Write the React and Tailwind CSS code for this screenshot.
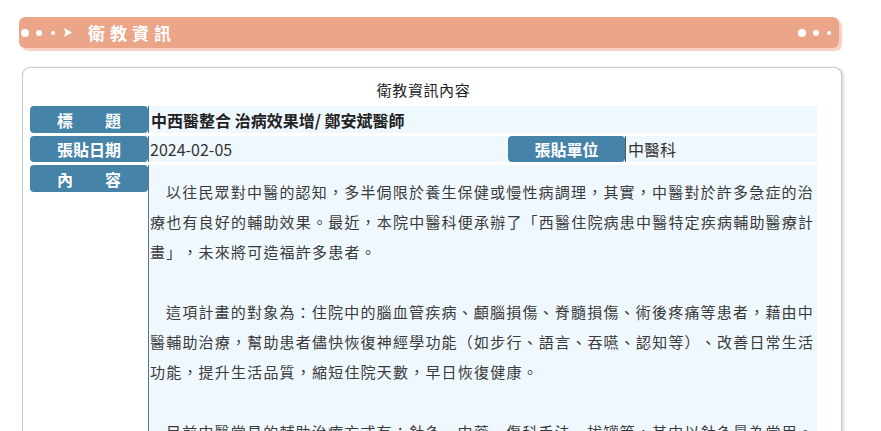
import React from "react";

const paragraphs = [
  "以往民眾對中醫的認知，多半侷限於養生保健或慢性病調理，其實，中醫對於許多急症的治療也有良好的輔助效果。最近，本院中醫科便承辦了「西醫住院病患中醫特定疾病輔助醫療計畫」，未來將可造福許多患者。",
  "這項計畫的對象為：住院中的腦血管疾病、顱腦損傷、脊髓損傷、術後疼痛等患者，藉由中醫輔助治療，幫助患者儘快恢復神經學功能（如步行、語言、吞嚥、認知等）、改善日常生活功能，提升生活品質，縮短住院天數，早日恢復健康。",
  "目前中醫常見的輔助治療方式有：針灸、中藥、傷科手法、拔罐等，其中以針灸最為常用。",
];

function Label({ children, className = "" }) {
  return (
    <div
      className={`flex items-center justify-center rounded-[4px] bg-[#4683a9] text-[16px] font-bold text-white shrink-0 ${className}`}
    >
      {children}
    </div>
  );
}

function HeaderBar() {
  return (
    <div className="flex h-[31px] w-[820px] items-center rounded-[6px] bg-[#eba689] shadow-[3px_3px_0_#f8d2c3]">
      <div className="flex items-center">
        <span className="ml-[2px] h-[8px] w-[8px] rounded-full bg-white" />
        <span className="ml-[7px] h-[6px] w-[6px] rounded-full bg-white" />
        <span className="ml-[9px] h-[4px] w-[4px] rounded-full bg-white" />
        <svg className="ml-[9px]" width="8" height="9" viewBox="0 0 8 9">
          <path d="M0 0 L8 4.5 L0 9 L1.6 4.5 Z" fill="#fff" />
        </svg>
      </div>
      <div className="ml-[16px] text-[17px] font-bold tracking-[5px] text-white">
        衛教資訊
      </div>
      <div className="ml-auto mr-[8px] flex items-center">
        <span className="h-[8px] w-[8px] rounded-full bg-white" />
        <span className="ml-[7px] h-[6px] w-[6px] rounded-full bg-white" />
        <span className="ml-[8px] h-[4px] w-[4px] rounded-full bg-white" />
      </div>
    </div>
  );
}

export default function App() {
  return (
    <div
      className="min-h-screen bg-white pl-[19px] pt-[17px] text-[#333] [text-spacing-trim:space-all]"
      style={{ fontFamily: '"Noto Sans CJK TC", "Noto Sans", "Liberation Sans", sans-serif' }}
    >
      <HeaderBar />

      <div className="ml-[3px] mt-[19px] w-[820px] rounded-t-[8px] border border-b-0 border-[#c9c9c9] bg-white pb-4 pl-[7px] pt-[11px] shadow-[2px_1px_3px_rgba(0,0,0,0.15)]">
        <div className="w-[787px] text-center text-[15px] leading-[22px] tracking-[0.6px] text-[#222]">
          衛教資訊內容
        </div>

        <div className="mt-[5px] flex w-[787px] flex-col gap-[3px]">
          <div className="flex h-[27px]">
            <Label className="w-[118px]">標　　題</Label>
            <div className="flex flex-1 items-center border-l border-[#56758f] bg-[#f0f8ff] pl-[2px] text-[16px] font-semibold text-[#222]">
              中西醫整合 治病效果增/ 鄭安斌醫師
            </div>
          </div>

          <div className="flex h-[26px]">
            <Label className="w-[118px]">張貼日期</Label>
            <div className="flex w-[360px] items-center border-l border-[#56758f] bg-[#f0f8ff] pl-[1px] text-[16px] text-[#333]">
              2024-02-05
            </div>
            <Label className="w-[117px]">張貼單位</Label>
            <div className="flex flex-1 items-center border-l border-[#555] bg-[#f0f8ff] pl-[2px] text-[16px] text-[#333]">
              中醫科
            </div>
          </div>

          <div className="flex items-start">
            <Label className="h-[27px] w-[118px]">內　　容</Label>
            <div className="flex-1 self-stretch border-l border-[#56758f] bg-[#f0f8ff] pb-8 pl-[1px] pt-[12px] text-[15px] leading-[30px] tracking-[1.2px] text-[#3a3a3a]">
              {paragraphs.map((p, i) => (
                <p key={i} className="mb-[30px] indent-[16px]">
                  {p}
                </p>
              ))}
            </div>
          </div>
        </div>
      </div>
    </div>
  );
}
